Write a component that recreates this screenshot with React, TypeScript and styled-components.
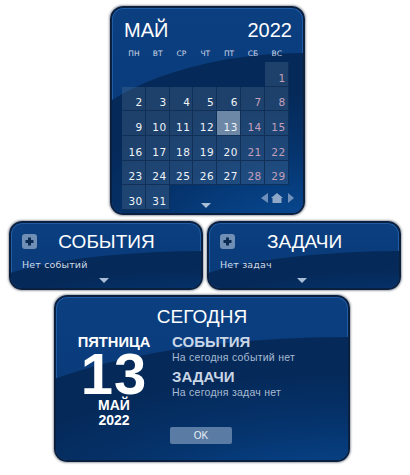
import React from "react";
import styled, { createGlobalStyle } from "styled-components";

const GlobalStyle = createGlobalStyle`
  html, body {
    margin: 0;
    padding: 0;
    background: #fff;
    font-family: "Liberation Sans", Arial, sans-serif;
  }
`;

const Page = styled.div`
  width: 410px;
  height: 475px;
  overflow: hidden;
  padding-top: 6px;
  box-sizing: border-box;
  display: flex;
  flex-direction: column;
`;

// shared look of the gadget panels
const Panel = styled.div`
  position: relative;
  box-sizing: border-box;
  overflow: hidden;
  color: #fff;
  border: 2px solid #0b1f3f;
  border-radius: 13px;
  box-shadow: 0 0 2px 1px rgba(40, 50, 70, 0.45), inset 0 0 0 1px #1f5ca3;
  background: linear-gradient(180deg, #0b3f80 0%, #0a3c7c 45%, #0a3a78 100%);

  > * {
    position: relative;
  }
`;

// the big curved shine, centred on the right edge so only a soft arc shows
const Gloss = styled.div<{ $top: number; $height: number }>`
  position: absolute;
  left: -30%;
  width: 260%;
  top: ${(p) => p.$top}px;
  height: ${(p) => p.$height}px;
  border-radius: 50%;
  background: radial-gradient(
    ellipse 50% 62% at 50% 78%,
    #0a52a3 0%,
    #074388 32%,
    #05336c 66%,
    #052a5a 100%
  );
`;

const CalendarPanel = styled(Panel)`
  width: 195px;
  height: 209px;
  margin-left: 110px;
  padding: 0 16px 0 10px;
  display: flex;
  flex-direction: column;
`;

const CalendarHead = styled.div`
  display: flex;
  justify-content: space-between;
  font-size: 20px;
  line-height: 23px;
  padding: 11px 0 0 2px;
  margin-right: -5px;
`;

const WeekRow = styled.div`
  display: grid;
  grid-template-columns: repeat(7, 23.8px);
  margin-top: 6px;
  height: 14px;
`;

const WeekDay = styled.span`
  font-family: "DejaVu Sans", sans-serif;
  font-size: 7.5px;
  line-height: 11px;
  color: #cdd8e6;
  text-align: center;
`;

const DayGrid = styled.div`
  display: grid;
  grid-template-columns: repeat(7, 23.8px);
  grid-auto-rows: 24.7px;
`;

const DayCell = styled.div<{ $empty?: boolean; $weekend?: boolean; $today?: boolean }>`
  box-sizing: border-box;
  display: flex;
  align-items: flex-end;
  justify-content: flex-end;
  padding: 0 2px 1px 0;
  font-family: "DejaVu Sans", sans-serif;
  font-size: 10.5px;
  line-height: 13px;
  letter-spacing: 0.5px;
  color: ${(p) => (p.$weekend ? "#c4a0bc" : "#f0f4f8")};
  background: ${(p) =>
    p.$empty ? "transparent" : p.$today ? "#6d87a6" : "rgba(88, 118, 150, 0.3)"};
  border-right: 1px solid ${(p) => (p.$empty ? "transparent" : "#103058")};
  border-bottom: 1px solid ${(p) => (p.$empty ? "transparent" : "#103058")};
`;

const Arrow = styled.div`
  width: 0;
  height: 0;
  border-left: 5.5px solid transparent;
  border-right: 5.5px solid transparent;
  border-top: 5px solid #a9bfd8;
`;

const CalendarArrow = styled(Arrow)`
  position: absolute;
  left: 89px;
  bottom: 5px;
`;

const NavIcons = styled.svg`
  position: absolute;
  right: 9px;
  bottom: 10px;
`;

const SmallRow = styled.div`
  display: flex;
  gap: 4px;
  margin: 6px 0 0 9px;
`;

const SmallPanel = styled(Panel)`
  width: 194px;
  height: 69px;
  padding: 8px 11px 0;
`;

const SmallHead = styled.div`
  display: flex;
  align-items: center;
`;

const SmallTitle = styled.div`
  flex: 1;
  text-align: center;
  font-size: 19px;
  line-height: 21px;
  padding-right: 14px;
`;

const PlusIcon = styled.svg`
  flex: none;
`;

const Note = styled.div`
  font-family: "DejaVu Sans", sans-serif;
  font-size: 9.5px;
  line-height: 12px;
  letter-spacing: 0.15px;
  color: #d0dbe8;
  margin-top: 7px;
`;

const SmallArrow = styled(Arrow)`
  position: absolute;
  left: 88px;
  bottom: 5px;
`;

const TodayPanel = styled(Panel)`
  width: 296px;
  height: 167px;
  margin: 5px 0 0 54px;
  padding-top: 8px;
`;

const TodayTitle = styled.div`
  text-align: center;
  font-size: 19px;
  line-height: 23px;
`;

const TodayBody = styled.div`
  display: flex;
  margin-top: 6px;
`;

const DateColumn = styled.div`
  width: 116px;
  flex: none;
  text-align: center;
  font-weight: 700;
  font-size: 14px;
  line-height: 15px;
`;

const DayName = styled.div`
  font-size: 14.7px;
  line-height: 16px;
`;

const DayNumber = styled.div`
  font-size: 58px;
  line-height: 44px;
  letter-spacing: 1px;
  margin: 2px 0 2px;
`;

const InfoColumn = styled.div`
  padding-left: 0;
`;

const InfoTitle = styled.div`
  font-size: 15px;
  font-weight: 700;
  line-height: 16px;
  color: #c9d6e6;
`;

const InfoText = styled.div`
  font-size: 10.5px;
  line-height: 12px;
  letter-spacing: 0.25px;
  color: #a8bbd2;
  margin: 1px 0 6px;
`;

const OkButton = styled.button`
  position: absolute;
  left: 114px;
  top: 130px;
  width: 62px;
  height: 17px;
  padding: 0;
  border: none;
  border-radius: 2px;
  background: #5a7ca4;
  color: #e8eef5;
  font-family: "Liberation Sans", sans-serif;
  font-size: 10px;
`;

const weekDays = ["ПН", "ВТ", "СР", "ЧТ", "ПТ", "СБ", "ВС"];

function Plus() {
  return (
    <PlusIcon width="15" height="15" viewBox="0 0 15 15">
      <rect width="15" height="15" rx="3" fill="#6f8fb4" />
      <path d="M6 3.500h3V6h2.500v3H9v2.500H6V9H3.500V6H6z" fill="#0d2a52" />
    </PlusIcon>
  );
}

export default function App() {
  const days: number[] = [];
  for (let i = 0; i < 6; i++) days.push(0);
  for (let d = 1; d <= 31; d++) days.push(d);

  return (
    <Page>
      <GlobalStyle />
      <CalendarPanel>
        <Gloss $top={45} $height={260} />
        <CalendarHead>
          <span>МАЙ</span>
          <span>2022</span>
        </CalendarHead>
        <WeekRow>
          {weekDays.map((w) => (
            <WeekDay key={w}>{w}</WeekDay>
          ))}
        </WeekRow>
        <DayGrid>
          {days.map((d, i) => (
            <DayCell key={i} $empty={d === 0} $weekend={i % 7 >= 5} $today={d === 13}>
              {d > 0 ? d : ""}
            </DayCell>
          ))}
        </DayGrid>
        <CalendarArrow />
        <NavIcons width="33" height="10" viewBox="0 0 33 10">
          <path d="M7 0v10L0 5z" fill="#6f90bb" />
          <path d="M16 0l6 5h-1.500v5h-9V5H10z" fill="#8fa8c8" />
          <path d="M27 0l6 5-6 5z" fill="#6f90bb" />
        </NavIcons>
      </CalendarPanel>

      <SmallRow>
        <SmallPanel>
          <Gloss $top={28} $height={120} />
          <SmallHead>
            <Plus />
            <SmallTitle>СОБЫТИЯ</SmallTitle>
          </SmallHead>
          <Note>Нет событий</Note>
          <SmallArrow />
        </SmallPanel>
        <SmallPanel>
          <Gloss $top={28} $height={120} />
          <SmallHead>
            <Plus />
            <SmallTitle>ЗАДАЧИ</SmallTitle>
          </SmallHead>
          <Note>Нет задач</Note>
          <SmallArrow />
        </SmallPanel>
      </SmallRow>

      <TodayPanel>
        <Gloss $top={40} $height={230} />
        <TodayTitle>СЕГОДНЯ</TodayTitle>
        <TodayBody>
          <DateColumn>
            <DayName>ПЯТНИЦА</DayName>
            <DayNumber>13</DayNumber>
            <div>МАЙ</div>
            <div>2022</div>
          </DateColumn>
          <InfoColumn>
            <InfoTitle>СОБЫТИЯ</InfoTitle>
            <InfoText>На сегодня событий нет</InfoText>
            <InfoTitle>ЗАДАЧИ</InfoTitle>
            <InfoText>На сегодня задач нет</InfoText>
          </InfoColumn>
        </TodayBody>
        <OkButton>OK</OkButton>
      </TodayPanel>
    </Page>
  );
}
